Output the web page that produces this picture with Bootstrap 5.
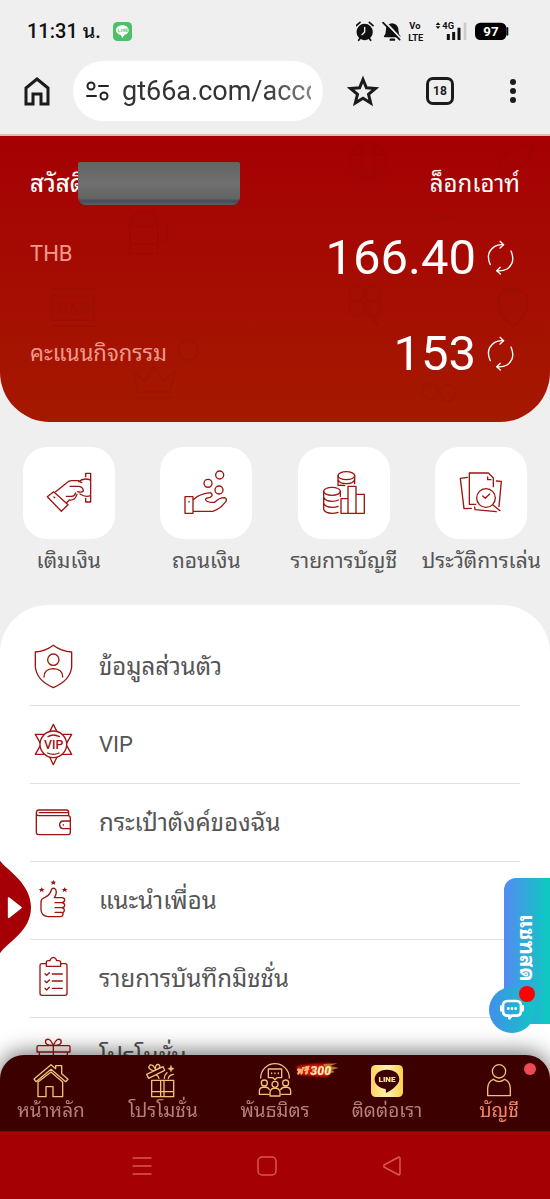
<!DOCTYPE html>
<html lang="th">
<head>
<meta charset="utf-8">
<meta name="viewport" content="width=device-width, initial-scale=1">
<title>บัญชี</title>
<link href="https://cdn.jsdelivr.net/npm/bootstrap@5.3.0/dist/css/bootstrap.min.css" rel="stylesheet">
<style>
body{background:#efefef;color:#555;font-family:Roboto,"Noto Sans Thai Looped","Noto Looped Thai","Droid Sans Thai",Loma,Waree,Garuda,"Noto Sans",sans-serif;font-size:21px;line-height:28px}
a{color:inherit;text-decoration:none}
svg{display:block;fill:none;stroke-linecap:round;stroke-linejoin:round}
.status-bar{height:62px;padding:0 40px 0 27px;color:#111;font-size:20px;font-weight:500}
.browser-bar{height:74px;padding:0 20px 14px;border-bottom:2px solid #efb4b4;color:#1b1b1b}
.address{height:60px;background:#fff;padding:0 12px 0 13px;margin:0 24px 0 20px}
.address input{border:0;outline:0;background:none;min-width:0;font-size:27px;height:44px;color:#333;padding:0;
-webkit-mask-image:linear-gradient(90deg,#000 75%,rgba(0,0,0,.6))}
.tab-count{width:28px;height:28px;margin:0 42px 0 47px;border:3px solid #1b1b1b;border-radius:7px;background:none;font-size:12px;font-weight:700;line-height:20px;color:#1b1b1b}
.hero{background:linear-gradient(#a50004,#a51900);border-radius:0 0 50px 50px;padding:16px 30px 14px;color:#fff}
.hero-pattern{stroke:#6e1000;opacity:.13;stroke-width:2}
.hero-top{height:64px;font-size:24px}.hero-thb{height:84px}.hero-points{height:108px}
.masked{left:48px;top:10px;width:162px;height:43px;background:linear-gradient(#636363,#707070 50%,#636363 85%,#434c58 91%,#5d6268);border-radius:2px 2px 8px 8px}
.hero-label{font-size:22px;color:#ef9a8e}
.amount{font-size:49px;line-height:56px}
.tile{width:92px;height:92px;border-radius:24px;background:#fff}
.tile svg,.menu svg{stroke:#9c1510;stroke-width:4}
.actions{padding-top:25px;padding-bottom:30px}
.panel{background:#fff;border-radius:48px 48px 0 0;padding:23px 30px 150px}
.menu a{height:78px;border-bottom:1px solid #e0e0e0;font-size:24px;gap:21px}
.menu .latin{font-size:22px}
.drawer{left:0;top:858px;z-index:1040}
.chat{right:0;top:878px;width:46px;height:146px;z-index:1035;border-radius:12px 0 0 12px;background:linear-gradient(90deg,#548af2,#0bcbc0);color:#fff}
.chat-label{writing-mode:vertical-rl;font-weight:700;font-size:21px;line-height:46px;height:132px;padding-bottom:6px}
.chat-circle{left:-15px;top:109px;width:46px;height:46px;background:linear-gradient(90deg,#4290e8,#12c4c8)}
.chat-dot{left:15px;top:108px;width:16px;height:16px;background:#f00}
.tabs{height:77px;background:#3d0000;border-radius:24px 24px 0 0;border-bottom:1px solid #6b1414;box-shadow:0 -2px 22px rgba(0,0,0,.6);color:#b57f7f}
.tabs-row{margin:0 -5px;padding-top:8px}
.tabs-row svg{stroke:#efc179;stroke-width:4}
.tabs-row a{font-size:19px;line-height:24px}
.tabs-row .active-tab{color:#f08664}
.alert-dot{right:19px;top:0;width:12px;height:12px;background:#ee4a55}
.promo-flag{left:76px;top:-2px}
.system-nav{height:67px;background:#a50003;padding:0 132px}
.system-nav svg{stroke:#db5358;stroke-width:1.5}
.system-nav button{width:20px}
</style>
</head>
<body class="vh-100 overflow-hidden d-flex flex-column">
<header class="flex-shrink-0">
<div class="status-bar d-flex align-items-center justify-content-between">
<div class="d-flex align-items-center gap-2"><span>11:31 น.</span>
<svg class="ms-1" width="19" height="19" viewBox="0 0 57 57"><rect width="57" height="57" rx="13" fill="#4fc069"/><path d="M28 10c-12 0-19 7-19 15 0 7 6 13 15 15l4 8 6-9c8-2 13-7 13-14 0-8-7-15-19-15z" fill="#fff"/><path d="M16 21v8h5M25 21v8M30 29v-8l5 8v-8M44 21h-5v8h5M39 25h4" stroke="#4fc069" stroke-width="2"/></svg></div>
<div class="d-flex align-items-center">
<svg width="154" height="22" viewBox="0 0 462 66" role="img" aria-label="การแจ้งเตือน สัญญาณ และแบตเตอรี่ 97">
<g stroke="#111" stroke-width="5"><circle cx="26" cy="36" r="22" fill="#111"/><path d="M1 17 12 7M51 17 40 7M13 54l-5 7M39 54l5 7"/><path d="M26 22v14l-8 8" stroke="#eee" stroke-width="4"/>
<path d="M86 49q6-5 6-17 0-18 16-20 17 2 17 20 0 12 6 17z" fill="#111"/><path d="M86 4 138 60" stroke="#eee" stroke-width="6"/><path d="M81 8 131 59"/><path d="M104 59h10" stroke-width="7"/></g>
<g fill="#111" font-family="Roboto" font-weight="700"><text x="160" y="27" font-size="28">Vo</text><text x="157" y="62" font-size="28">LTE</text><text x="259" y="27" font-size="28">4G</text></g>
<path d="M239 15l7-8 7 8zM239 19l7 8 7-8z" fill="#111"/><path d="M277 42v18M293 36v24M309 23v37" stroke="#111" stroke-width="9" stroke-linecap="butt"/><path d="M327 8v52" stroke="#ccc" stroke-width="8" stroke-linecap="butt"/>
<rect x="357" y="8" width="94" height="52" rx="16" fill="#000"/><path d="M454 24v20" stroke="#111" stroke-width="6"/><text x="405" y="47" font-family="Roboto" font-weight="700" font-size="40" fill="#fff" text-anchor="middle">97</text></svg></div>
</div>
<div class="browser-bar d-flex align-items-center">
<button class="btn p-0 border-0 flex-shrink-0" aria-label="หน้าแรก"><svg width="33" height="34" viewBox="0 0 33 34" stroke="#1b1b1b" stroke-width="3"><path stroke-linejoin="miter" d="M6 30V14L17 5l11 9v16h-7V20h-8v10z"/></svg></button>
<div class="address flex-grow-1 rounded-pill d-flex align-items-center">
<svg class="flex-shrink-0" width="24" height="24" viewBox="0 0 24 24" stroke="#222" stroke-width="2"><circle cx="5" cy="7" r="3.500"/><path d="M13 7h9M1 17h9"/><circle cx="18" cy="17" r="3.500"/></svg>
<input class="flex-grow-1 w-100 ms-2 ps-1" aria-label="ที่อยู่เว็บ" value="gt66a.com/account"></div>
<button class="btn p-0 border-0 flex-shrink-0" aria-label="บุ๊กมาร์ก"><svg width="32" height="32" viewBox="0 0 32 32" stroke="#1b1b1b" stroke-width="3"><path stroke-linejoin="miter" d="M16 4.500l3.400 8.300 9 .7-6.900 5.800 2.200 8.700L16 23.300 8.300 28l2.200-8.700-6.900-5.800 9-.7z"/></svg></button>
<button class="tab-count p-0 flex-shrink-0">18</button>
<button class="btn p-0 border-0 flex-shrink-0" aria-label="เมนู"><svg width="34" height="28" viewBox="0 0 34 28"><g fill="#1b1b1b"><circle cx="17" cy="5" r="3"/><circle cx="17" cy="14" r="3"/><circle cx="17" cy="23" r="3"/></g></svg></button>
</div>
</header>
<main>
<section class="hero position-relative">
<svg class="hero-pattern position-absolute top-0 start-0 w-100 h-100" viewBox="0 0 550 286" aria-hidden="true">
<circle cx="368" cy="25" r="18"/><path d="M352 18h32M352 32h32M362 8v34M374 8v34M500 28q8-20 32-20-2 25-30 28zM130 90q0-14 14-14t14 14v28h-28zM130 90h28M130 108h28M167 86v20M52 160h42v24H52zM52 153h44M52 190h44M134 236l4 20h32l5-20-12 9-9-14-9 14zM138 262h32"/>
<path d="M60 167v10h5q3-2 0-5 3-3 0-5zM70 177l3-10 4 10M82 177v-10h5q3 3 0 5h-4l5 5"/>
<circle cx="188" cy="214" r="10"/><circle cx="357" cy="158" r="8"/><circle cx="373" cy="158" r="8"/><circle cx="357" cy="172" r="8"/><circle cx="373" cy="172" r="8"/><path d="M366 170l12 20M499 160q14-14 28 0 4 18-14 30-18-12-14-30M508 152l5 5 6-6"/><circle cx="430" cy="255" r="8"/><circle cx="448" cy="257" r="8"/><path d="M435 84q10-8 20-2"/></svg>
<div class="hero-top position-relative d-flex align-items-center justify-content-between"><span class="fw-medium">สวัสดี</span><span class="masked position-absolute"></span><a href="#">ล็อกเอาท์</a></div>
<div class="hero-thb position-relative d-flex align-items-center justify-content-between"><span class="hero-label mb-2">THB</span><div class="d-flex align-items-center gap-2"><span class="amount">166.40</span><button class="btn p-0 border-0" aria-label="รีเฟรชยอดเงิน"><svg width="36" height="36" viewBox="0 0 108 108" stroke="#fff" stroke-width="4"><path d="M19 74Q3 40 31 20q11-7 26-6M48 4l11 10-11 10M81 33q15 35-12 54-13 7-30 5M49 82l-11 10 11 10"/></svg></button></div></div>
<div class="hero-points position-relative d-flex align-items-center justify-content-between"><span class="hero-label">คะแนนกิจกรรม</span><div class="d-flex align-items-center gap-2"><span class="amount">153</span><button class="btn p-0 border-0" aria-label="รีเฟรชคะแนน"><svg width="36" height="36" viewBox="0 0 108 108" stroke="#fff" stroke-width="4"><path d="M19 74Q3 40 31 20q11-7 26-6M48 4l11 10-11 10M81 33q15 35-12 54-13 7-30 5M49 82l-11 10 11 10"/></svg></button></div></div>
</section>
<nav class="actions row g-0 text-center" aria-label="ธุรกรรม">
<a class="col-3 d-flex flex-column align-items-center gap-2 text-nowrap" href="#"><span class="tile"><svg viewBox="0 0 276 276"><path d="M188 89V79h15v86h-15v-11M203 99q-22-8-36 5M203 146q-16 6-32-5M92 134l-19 15 42 44 20-20zM93 150l2 2M98 134l39-31q4-2 10-2h19l10 6M141 118h26q14 2 14 14-6 6-17 2M130 168l9-9q17 2 23-17M158 138q-3 10-12 10h-16"/></svg></span><span>เติมเงิน</span></a>
<a class="col-3 d-flex flex-column align-items-center gap-2 text-nowrap" href="#"><span class="tile"><svg viewBox="0 0 276 276"><path d="M75 149h24v50H75zM87 163v2M99 159l12-10q26-13 42-11 8 8-3 13-15 2-13 8 6 9 27 7 14-14 29-14 9 3 5 11-18 24-40 30H99"/><circle cx="179" cy="84" r="12"/><circle cx="144" cy="109" r="12"/><circle cx="177" cy="129" r="12"/></svg></span><span>ถอนเงิน</span></a>
<a class="col-3 d-flex flex-column align-items-center gap-2 text-nowrap" href="#"><span class="tile"><svg viewBox="0 0 276 276"><ellipse cx="145" cy="86" rx="25" ry="12"/><path d="M120 86v30M170 86v24M120 98q5 12 25 12t25-12M121 115q8-1 19 1"/><ellipse cx="102" cy="133" rx="25" ry="12"/><path d="M77 133v54q4 12 25 12 10 0 18-3M127 133v15M77 151q5 12 25 12 12 0 19-4M77 169q5 12 25 12 12 0 18-3M129 155h21v44h-21zM150 118h24v81h-24zM174 142h25v57h-25z"/></svg></span><span>รายการบัญชี</span></a>
<a class="col-3 d-flex flex-column align-items-center gap-2 text-nowrap" href="#"><span class="tile"><svg viewBox="0 0 276 276"><path d="M122 172h-19V78h57l15 15v26M158 90v8h10M97 91l-21 3 11 91 22-1M184 102l15 1-7 75M119 180l1 8 64 6M174 174l21 17M143 147l8 7 13-13"/><circle cx="153" cy="153" r="28"/></svg></span><span>ประวัติการเล่น</span></a>
</nav>
<nav class="panel menu" aria-label="เมนูบัญชี">
<a class="d-flex align-items-center" href="#"><svg width="48" height="48" viewBox="0 0 144 144"><path d="M70 7Q45 26 16 27v45q4 40 54 62 51-22 55-62V27Q95 26 70 7zM42 102q0-24 28-25 28 1 28 25"/><circle cx="70" cy="50" r="17"/></svg>ข้อมูลส่วนตัว</a>
<a class="latin d-flex align-items-center" href="#"><svg width="48" height="48" viewBox="0 0 144 144"><path d="M70 10l15 30h40l-17 30 17 30H85l-15 31-15-31H16l17-30-17-30h39z"/><circle cx="70" cy="70" r="40" fill="#fff"/><path d="M54 47q16-10 34 0M53 96q17 8 34 0"/><text x="71" y="83" text-anchor="middle" font-family="Roboto" font-size="37" font-weight="500" fill="#9c1510" stroke="none">VIP</text></svg>VIP</a>
<a class="d-flex align-items-center" href="#"><svg width="48" height="48" viewBox="0 0 144 144"><path d="M19 44v56q0 7 7 7h88q7 0 7-7V57q0-7-7-7H26q-7 0-7-8 0-9 8-9h82q7 0 7 7v9M28 41h86M121 66H98q-9 2-9 11t9 12h23M100 77v1"/></svg>กระเป๋าตังค์ของฉัน</a>
<a class="d-flex align-items-center" href="#"><svg width="48" height="48" viewBox="0 0 144 144"><path d="M73 62h22q9 0 9 7t-9 8H75M95 77q9 1 9 8t-9 7H75M95 92q8 1 8 8t-8 6H75M94 106q7 1 5 7t-9 6H54q-21-2-21-22V75q0-10 12-14 16-7 20-25 9-6 13 4 3 10-5 22"/><path d="M70 9l3 5h6l-5 4 2 6-6-4-6 4 2-6-5-4h6zM35 31l3 5h6l-5 4 2 6-6-4-6 4 2-6-5-4h6zM104 31l3 5h6l-5 4 2 6-6-4-6 4 2-6-5-4h6z" fill="#9c1510" stroke="none"/></svg>แนะนำเพื่อน</a>
<a class="d-flex align-items-center" href="#"><svg width="48" height="48" viewBox="0 0 144 144"><path d="M49 26H36q-6 0-6 6v83q0 6 6 6h69q6 0 6-6V32q0-6-6-6H92M49 34V22q0-5 7-5h4q2-9 10-10 8 1 10 10h6q6 0 6 6v11zM45 56l5 5 8-8M45 78l5 5 8-8M45 100l5 5 8-8M67 57h30M67 78h30M67 100h30"/></svg>รายการบันทึกมิชชั่น</a>
<a class="d-flex align-items-center" href="#"><svg width="48" height="48" viewBox="0 0 144 144"><path d="M25 38h91q4 0 4 4v15H21V42q0-4 4-4zM28 57v68h84V57M70 38v87M70 37Q43 38 47 22q12-11 23 15 11-26 23-15 4 16-23 15M60 57h20"/></svg>โปรโมชั่น</a>
</nav>
</main>
<button class="drawer btn p-0 border-0 position-absolute" aria-label="เปิดเมนูด้านข้าง"><svg width="32" height="98" viewBox="0 0 96 294"><path d="M0 8C20 36 93 75 93 148S22 253 0 286z" fill="#a50006"/><path d="M26 120l37 29-37 29z" fill="#fff" stroke="#fff" stroke-width="5"/></svg></button>
<button class="chat position-absolute border-0 p-0">
<span class="chat-circle position-absolute rounded-circle d-flex align-items-center justify-content-center"><svg width="24" height="22" viewBox="0 0 72 66"><path d="M23 6h26q14 0 14 14v16q0 14-14 14H35l-7 8v-8h-5Q9 50 9 36V20Q9 6 23 6z" stroke="#fff" stroke-width="8"/><path d="M4 22v12M68 22v12M25 28v1M36 28v1M47 28v1" stroke="#fff" stroke-width="8"/></svg></span>
<span class="chat-dot position-absolute rounded-circle"></span><span class="chat-label d-block text-center">แชทสด</span></button>
<footer class="fixed-bottom">
<nav class="tabs" aria-label="แถบนำทาง"><div class="tabs-row d-flex">
<a class="w-25 d-flex flex-column align-items-center text-nowrap" href="#"><svg width="36" height="36" viewBox="0 0 108 108"><path d="M3 48 54 5l14 12V8h18v24l19 17-7 7-44-37L9 56zM15 57v44h24V71h21v30h29V57L54 27z"/></svg>หน้าหลัก</a>
<a class="w-25 d-flex flex-column align-items-center text-nowrap" href="#"><svg width="36" height="36" viewBox="0 0 108 108"><path d="M20 52h66v49H20zM20 86h66M47 52v49M57 52v49M5 34l49-23 5 11-48 24zM27 24Q4 17 15 6q10-2 17 15Q29 2 42 5q9 8-10 16M42 46q-2-8-7-9M58 46q0-10 8-17M70 46q2-10 15-12"/><path d="M78 7l3 7 7 3-7 3-3 7-3-7-7-3 7-3z" fill="#efc179" stroke-width="1"/></svg>โปรโมชั่น</a>
<a class="position-relative w-25 d-flex flex-column align-items-center text-nowrap" href="#"><svg width="36" height="36" viewBox="0 0 108 108"><path d="M11 45a43 43 0 0 1 86 0M34 18h40v26H60l-6 6-6-6H34zM44 30v2M54 30v2M64 30v2"/><circle cx="22" cy="60" r="9"/><circle cx="86" cy="60" r="9"/><circle cx="54" cy="64" r="9"/><path d="M7 94V84q0-11 15-12 13 1 15 8M71 80q3-7 15-8 15 1 15 12v10H73M7 94h28M39 99V87q2-11 15-12 13 1 15 12v12z"/></svg>พันธมิตร
<svg class="promo-flag position-absolute" width="46" height="26" viewBox="0 0 138 78"><defs><filter id="glow"><feGaussianBlur stdDeviation="3"/></filter></defs><path d="M5 15 50 9 105 7l10 18-20 24-45-4-42-4z" fill="#d01408" stroke="none" filter="url(#glow)"/><path d="M85 9l42-2-22 8 26 6-22 6 10 6-20 6z" fill="#b87a24" stroke="none"/><g fill="#fff0c0" stroke="#ffb36a" stroke-width="1" font-family="Roboto" font-style="italic" font-weight="900"><text x="4" y="38" font-size="28">ฟรี</text><text x="46" y="41" font-size="37">300</text></g></svg></a>
<a class="w-25 d-flex flex-column align-items-center text-nowrap" href="#"><svg width="36" height="36" viewBox="0 0 108 108"><defs><linearGradient id="gold"><stop stop-color="#ffd45b"/><stop offset=".5" stop-color="#fff2b5"/><stop offset="1" stop-color="#ffce4b"/></linearGradient></defs><g stroke="none"><rect x="6" y="6" width="96" height="96" rx="14" fill="url(#gold)"/><path d="M54 20c-23 0-37 13-37 29 0 15 12 26 33 29l1 12c14-7 40-23 40-41 0-16-14-29-37-29z" fill="#3d0000"/><text x="54" y="57" text-anchor="middle" font-family="Roboto" font-size="24" font-weight="900" fill="#ffe793">LINE</text></g></svg>ติดต่อเรา</a>
<a class="active-tab position-relative w-25 d-flex flex-column align-items-center text-nowrap" href="#" aria-current="page"><svg width="36" height="36" viewBox="0 0 108 108"><circle cx="54" cy="25" r="20"/><path d="M20 98V76q1-21 17-27 17 14 34 0 16 6 17 27v22z"/></svg>บัญชี<span class="alert-dot position-absolute rounded-circle"></span></a>
</div></nav>
<div class="system-nav d-flex align-items-center justify-content-between">
<button class="btn p-0 border-0" aria-label="แอปล่าสุด"><svg width="20" height="20" viewBox="0 0 20 20"><path d="M1 2h18M1 10h18M1 18h18"/></svg></button>
<button class="btn p-0 border-0" aria-label="หน้าจอหลัก"><svg width="20" height="20" viewBox="0 0 20 20"><rect x="1" y="1" width="18" height="18" rx="4"/></svg></button>
<button class="btn p-0 border-0 me-3" aria-label="ย้อนกลับ"><svg width="20" height="20" viewBox="0 0 20 20"><path d="M17 1 2 9v2l15 8 1-1V2z"/></svg></button>
</div>
</footer>
<script src="https://cdn.jsdelivr.net/npm/bootstrap@5.3.0/dist/js/bootstrap.bundle.min.js"></script>
</body>
</html>
